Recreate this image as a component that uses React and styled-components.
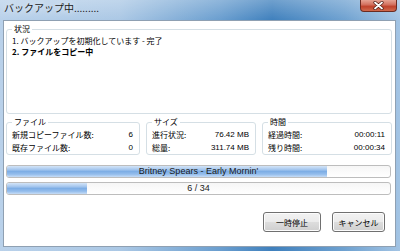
import React from 'react';
import styled, { createGlobalStyle } from 'styled-components';

const GlobalStyle = createGlobalStyle`
  html, body {
    margin: 0;
    padding: 0;
    width: 400px;
    height: 251px;
    overflow: hidden;
  }
  body {
    font-family: "Noto Sans CJK JP", "Liberation Sans", sans-serif;
  }
`;

const Window = styled.div`
  width: 400px;
  height: 251px;
  box-sizing: border-box;
  padding: 0 4px 4px 3px;
  display: flex;
  flex-direction: column;
  background:
    linear-gradient(to bottom, rgba(255,255,255,0.25), rgba(255,255,255,0) 20px),
    linear-gradient(to right, #b9d1ea 0%, #abc8e5 30%, #6a9ecf 55%, #3f80bd 68%, #6ea1d0 86%, #a3c4e4 100%);
`;

const TitleBar = styled.div`
  height: 20px;
  display: flex;
  align-items: flex-start;
`;

const Title = styled.div`
  padding-left: 1px;
  font-size: 10px;
  line-height: 16px;
  color: #1a1a1a;
  text-shadow: 0 0 6px rgba(255,255,255,0.9);
`;

const CloseButton = styled.div`
  margin-left: auto;
  margin-right: -1px;
  width: 37px;
  height: 12px;
  box-sizing: border-box;
  border: 1px solid #6b2b21;
  border-top: none;
  border-radius: 0 0 4px 4px;
  background: linear-gradient(to bottom, #e6a393 0%, #d47462 40%, #c0432c 60%, #d06a4e 100%);
  display: flex;
  align-items: center;
  justify-content: center;
`;

const Client = styled.div`
  flex: 1;
  background: #fff;
  border: 1px solid #8fa0b2;
  display: flex;
  flex-direction: column;
  padding: 0 3px 0 2px;
`;

const Box = styled.fieldset`
  margin: ${p => p.$top || 0}px 0 0;
  padding: 0 6px 0 5px;
  border: 1px solid #d5dfe5;
  border-radius: 3px;
  min-width: 0;
`;

const Legend = styled.legend`
  padding: 0 2px;
  font-size: 8px;
  line-height: 10px;
  color: #000;
`;

const StatusBody = styled.div`
  height: 79px;
  box-sizing: border-box;
  padding-top: 2px;
  font-size: 8px;
  line-height: 10.5px;
  color: #000;
`;

const StatusLine = styled.div`
  font-weight: ${p => (p.$bold ? 700 : 400)};
`;

const GroupRow = styled.div`
  display: grid;
  grid-template-columns: 134px 110px 130px;
  column-gap: 6px;
  margin-top: 3px;
`;

const InfoRow = styled.div`
  display: flex;
  justify-content: space-between;
  align-items: center;
  height: 13px;
  font-size: 8px;
  color: #000;
  &:first-of-type {
    margin-top: 1px;
  }
`;

const Value = styled.span`
  font-family: "Liberation Sans", sans-serif;
  font-size: 8px;
`;

const Track = styled.div`
  margin-top: ${p => p.$top}px;
  margin-right: 1px;
  height: 13px;
  box-sizing: border-box;
  border: 1px solid #bdbdbd;
  border-radius: 3px;
  background: linear-gradient(to bottom, #f6f6f6, #ffffff);
  display: grid;
  overflow: hidden;
`;

const Fill = styled.div`
  grid-area: 1 / 1;
  height: 100%;
  background: linear-gradient(to bottom, #d3e4f7 0%, #a9c9ef 30%, #7eaee5 50%, #94bdec 75%, #c7ddf6 100%);
`;

const BarLabel = styled.div`
  grid-area: 1 / 1;
  text-align: center;
  font-family: "Liberation Sans", sans-serif;
  font-size: 9px;
  line-height: 11px;
  color: #1a1a1a;
`;

const ButtonRow = styled.div`
  display: flex;
  justify-content: flex-end;
  gap: 11px;
  margin-top: 17px;
  padding-right: 7px;
`;

const Button = styled.button`
  width: ${p => p.$w}px;
  height: 20px;
  padding: 0;
  font-family: "Noto Sans CJK JP", sans-serif;
  font-size: 8px;
  color: #000;
  border: 1px solid #707070;
  border-radius: 3px;
  box-shadow: inset 0 0 0 1px #fcfcfc;
  background: linear-gradient(to bottom, #f2f2f2 0%, #ebebeb 49%, #dddddd 51%, #cfcfcf 100%);
`;

const groups = [
  { title: 'ファイル', rows: [['新規コピーファイル数:', '6'], ['既存ファイル数:', '0']] },
  { title: 'サイズ', rows: [['進行状況:', '76.42 MB'], ['総量:', '311.74 MB']] },
  { title: '時間', rows: [['経過時間:', '00:00:11'], ['残り時間:', '00:00:34']] },
];

const bars = [
  { label: "Britney Spears - Early Mornin'", pct: 83.6, top: 10 },
  { label: '6 / 34', pct: 21, top: 4 },
];

const App = () => {
  return (
    <>
      <GlobalStyle />
      <Window>
        <TitleBar>
          <Title>バックアップ中.........</Title>
          <CloseButton>
            <svg width="11" height="9" viewBox="0 0 11 9">
              <path d="M2 1.5 L9 7.5 M9 1.5 L2 7.5" stroke="#4a1a12" strokeWidth="3.2" strokeLinecap="round" />
              <path d="M2 1.5 L9 7.5 M9 1.5 L2 7.5" stroke="#ffffff" strokeWidth="1.8" strokeLinecap="round" />
            </svg>
          </CloseButton>
        </TitleBar>
        <Client>
          <Box $top={3}>
            <Legend>状況</Legend>
            <StatusBody>
              <StatusLine>1. バックアップを初期化しています - 完了</StatusLine>
              <StatusLine $bold>2. ファイルをコピー中</StatusLine>
            </StatusBody>
          </Box>
          <GroupRow>
            {groups.map(g => (
              <Box key={g.title}>
                <Legend>{g.title}</Legend>
                {g.rows.map(([k, v]) => (
                  <InfoRow key={k}>
                    <span>{k}</span>
                    <Value>{v}</Value>
                  </InfoRow>
                ))}
              </Box>
            ))}
          </GroupRow>
          {bars.map(b => (
            <Track key={b.label} $top={b.top}>
              <Fill style={{ width: `${b.pct}%` }} />
              <BarLabel>{b.label}</BarLabel>
            </Track>
          ))}
          <ButtonRow>
            <Button $w={58}>一時停止</Button>
            <Button $w={53}>キャンセル</Button>
          </ButtonRow>
        </Client>
      </Window>
    </>
  );
};

export default App;
